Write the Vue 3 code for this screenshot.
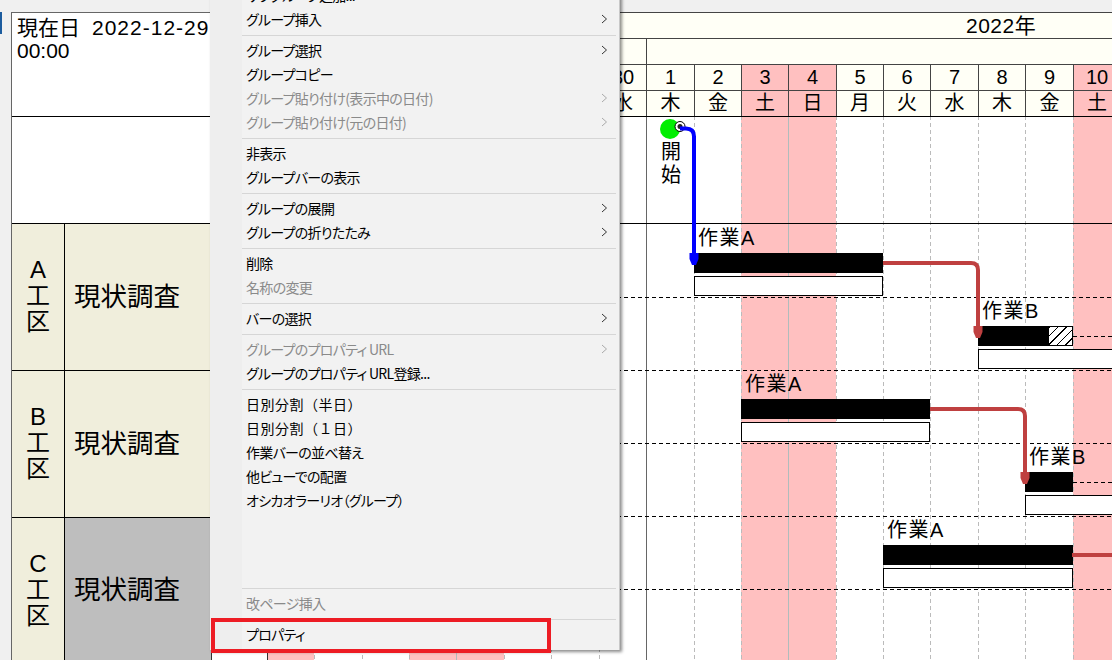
<template>
  <div class="app">
    <div class="top-strip"></div>
    <div class="sheet">
      <div class="rail"><div class="rail-mark"></div></div>

      <!-- 左側の工区リスト -->
      <div class="side">
        <div class="side-head">
          <span class="today-label">現在日</span><span class="today-date">2022-12-29</span><br />00:00
        </div>
        <div class="side-blank"></div>
        <div v-for="g in groups" :key="g.area" class="group" :class="{ last: g.gray }">
          <div class="area">
            <span>{{ g.area }}</span>
            <span>工</span>
            <span>区</span>
          </div>
          <div class="name" :class="{ gray: g.gray }">現状調査</div>
        </div>
      </div>

      <!-- タイムライン -->
      <div class="timeline" :style="{ width: totalWidth + 'px' }">
        <div class="year-row">2022年</div>
        <div class="month-row">
          <div class="month-nov"></div>
          <div class="month-dec"></div>
        </div>
        <div class="day-row" :style="gridCols">
          <div v-for="d in days" :key="d.key" class="head-cell" :class="{ off: d.off }">{{ d.num }}</div>
        </div>
        <div class="week-row" :style="gridCols">
          <div v-for="d in days" :key="d.key" class="head-cell" :class="{ off: d.off }">{{ d.wd }}</div>
        </div>

        <div class="chart">
          <div class="stripes" :style="gridCols">
            <div v-for="d in days" :key="d.key" class="stripe" :class="[d.line, { off: d.off }]"></div>
          </div>

          <div class="row row-first"></div>
          <div class="row row-solid"></div>
          <div v-for="n in 5" :key="n" class="row row-dashed"></div>

          <div class="label start" :style="place(661, 141)">開<br />始</div>

          <template v-for="b in bars" :key="b.label + b.x">
            <div class="label" :style="place(b.x + 4, b.y - 27)">{{ b.label }}</div>
            <div class="bar" :style="{ ...place(b.x, b.y), width: b.w + 'px' }"></div>
            <div v-if="b.hatch" class="hatch" :style="{ ...place(b.x + b.w, b.y), width: b.hatch + 'px' }"></div>
            <div class="plan" :style="{ ...place(b.x, b.y + 23), width: b.plan + 'px' }"></div>
            <div v-if="b.tail" class="tail" :style="{ ...place(b.x + b.w + (b.hatch || 0), b.y + 10), width: '60px' }"></div>
            <div v-if="b.link" class="link-out" :style="{ ...place(b.x + b.w - 1, b.y + 8), width: '60px' }"></div>
          </template>

          <svg class="links" :width="totalWidth" height="544" :viewBox="`211 116 ${totalWidth} 544`">
            <circle cx="670" cy="129" r="10" fill="#00ee00" />
            <circle cx="680" cy="126.5" r="5" fill="#fff" stroke="#000" stroke-width="1" />
            <circle cx="680" cy="126.5" r="2.5" fill="#222" />
            <path d="M680 128.5 H686 Q694 128.5 694 136.5 V258" class="link-blue" />
            <polygon points="689.5,253 698.5,253 698.5,259 696,265 692,265 689.5,259" fill="#0000ff" />
            <path d="M883 263 H971 Q978 263 978 270 V332" class="link-red" />
            <polygon points="973.5,326 982.5,326 982.5,332 980,338 976,338 973.5,332" fill="#bf4040" />
            <path d="M930 409 H1018 Q1025 409 1025 416 V478" class="link-red" />
            <polygon points="1020.5,472 1029.5,472 1029.5,478 1027,484 1023,484 1020.5,478" fill="#bf4040" />
          </svg>
        </div>
      </div>
    </div>

    <!-- 右クリックメニュー -->
    <div class="menu">
      <template v-for="(m, i) in menu" :key="i">
        <div v-if="m === '-'" class="sep"></div>
        <div v-else-if="m === ' '" class="blank"></div>
        <div v-else class="item" :class="{ disabled: m.off, full: m.full }">
          <span>{{ m.text }}</span>
          <svg v-if="m.arrow" class="chev" width="7" height="10" viewBox="0 0 7 10">
            <path d="M1 1 L5.5 5 L1 9" fill="none" stroke="currentColor" stroke-width="1" />
          </svg>
        </div>
      </template>
    </div>

    <div class="callout"></div>
  </div>
</template>

<script setup>
const groups = [
  { area: 'A' },
  { area: 'B' },
  { area: 'C', gray: true }
]

// 列幅は元画面のグリッド線に合わせる
const days = [
  { key: 'pre', num: '', wd: '', w: 56, line: 'line-dark' },
  { key: 'n23', num: 23, wd: '水', w: 47, line: 'line-dark', off: true },
  { key: 'n24', num: 24, wd: '木', w: 48 },
  { key: 'n25', num: 25, wd: '金', w: 47 },
  { key: 'n26', num: 26, wd: '土', w: 47, off: true },
  { key: 'n27', num: 27, wd: '日', w: 48, off: true, line: 'line-sun' },
  { key: 'n28', num: 28, wd: '月', w: 47 },
  { key: 'n29', num: 29, wd: '火', w: 48 },
  { key: 'n30', num: 30, wd: '水', w: 47 },
  { key: 'd1', num: 1, wd: '木', w: 48, line: 'line-month' },
  { key: 'd2', num: 2, wd: '金', w: 47 },
  { key: 'd3', num: 3, wd: '土', w: 47, off: true },
  { key: 'd4', num: 4, wd: '日', w: 48, off: true, line: 'line-sun' },
  { key: 'd5', num: 5, wd: '月', w: 47 },
  { key: 'd6', num: 6, wd: '火', w: 47 },
  { key: 'd7', num: 7, wd: '水', w: 48 },
  { key: 'd8', num: 8, wd: '木', w: 47 },
  { key: 'd9', num: 9, wd: '金', w: 48 },
  { key: 'd10', num: 10, wd: '土', w: 47, off: true }
]

const totalWidth = days.reduce((sum, d) => sum + d.w, 0)
const gridCols = { gridTemplateColumns: days.map(d => d.w + 'px').join(' ') }

const bars = [
  { label: '作業A', x: 694, y: 253, w: 189, plan: 189 },
  { label: '作業B', x: 978, y: 326, w: 71, hatch: 24, plan: 200, tail: true },
  { label: '作業A', x: 741, y: 399, w: 189, plan: 189 },
  { label: '作業B', x: 1025, y: 472, w: 48, plan: 200, tail: true },
  { label: '作業A', x: 883, y: 545, w: 190, plan: 190, link: true }
]

// 画面座標からチャート内の座標へ
function place(x, y) {
  return { left: x - 211 + 'px', top: y - 116 + 'px' }
}

const menu = [
  { text: 'サブグループ追加...' },
  { text: 'グループ挿入', arrow: true },
  '-',
  { text: 'グループ選択', arrow: true },
  { text: 'グループコピー' },
  { text: 'グループ貼り付け(表示中の日付)', arrow: true, off: true },
  { text: 'グループ貼り付け(元の日付)', arrow: true, off: true },
  '-',
  { text: '非表示' },
  { text: 'グループバーの表示' },
  '-',
  { text: 'グループの展開', arrow: true },
  { text: 'グループの折りたたみ', arrow: true },
  '-',
  { text: '削除' },
  { text: '名称の変更', off: true },
  '-',
  { text: 'バーの選択', arrow: true },
  '-',
  { text: 'グループのプロパティ URL', arrow: true, off: true },
  { text: 'グループのプロパティ URL登録...' },
  '-',
  { text: '日別分割（半日）', full: true },
  { text: '日別分割（１日）', full: true },
  { text: '作業バーの並べ替え' },
  { text: '他ビューでの配置' },
  { text: 'オシカオラーリオ（グループ）' },
  ' ',
  '-',
  { text: '改ページ挿入', off: true },
  '-',
  { text: 'プロパティ' }
]
</script>

<style scoped>
.app {
  position: relative;
  width: 1112px;
  height: 660px;
  overflow: hidden;
  background: #f0f0f0;
  font-family: "Liberation Sans", "Noto Sans CJK JP", sans-serif;
  color: #000;
}

.top-strip {
  height: 12px;
}

.sheet {
  display: flex;
  align-items: flex-start;
}

.rail {
  flex: none;
  width: 11px;
}

.rail-mark {
  width: 2px;
  height: 22px;
  background: #1c5c9e;
}

.side {
  flex: none;
  width: 200px;
  border-left: 1px solid #666;
  box-sizing: border-box;
  background: #fff;
}

.side-head {
  height: 104px;
  box-sizing: border-box;
  border-top: 1px solid #666;
  padding: 3px 0 0 5px;
  font-size: 21px;
  line-height: 23px;
  white-space: nowrap;
}

.today-date {
  margin-left: 12px;
  letter-spacing: 1px;
}

.side-blank {
  height: 107px;
  border-top: 1px solid #000;
  box-sizing: border-box;
}

.group {
  display: flex;
  height: 147px;
  box-sizing: border-box;
  border-top: 1px solid #000;
}

.group.last {
  height: 146px;
}

.area {
  flex: none;
  width: 53px;
  box-sizing: border-box;
  padding-bottom: 2px;
  border-right: 1px solid #000;
  background: #f0eedc;
  display: flex;
  flex-direction: column;
  align-items: center;
  justify-content: center;
  font-size: 24px;
  line-height: 26px;
}

.name {
  flex: 1;
  display: flex;
  align-items: center;
  padding: 0 0 6px 9px;
  background: #f0eedc;
  font-size: 26.5px;
  white-space: nowrap;
}

.name.gray {
  background: #bebebe;
}

.timeline {
  flex: none;
  background: #fff;
}

.year-row,
.month-row,
.day-row,
.week-row {
  height: 26px;
  box-sizing: border-box;
  border-top: 1px solid #444;
  background: #fffff6;
}

.year-row {
  padding-left: 755px;
  font-size: 21px;
  line-height: 26px;
  letter-spacing: 0.5px;
}

.month-row {
  display: flex;
}

.month-nov {
  width: 435px;
}

.month-dec {
  flex: 1;
  border-left: 1px solid #444;
}

.day-row,
.week-row {
  display: grid;
}

.head-cell {
  box-sizing: border-box;
  border-left: 1px solid #444;
  text-align: center;
  font-size: 20px;
  line-height: 25px;
  overflow: hidden;
}

.head-cell.off {
  background: #ffc0c0;
}

.chart {
  position: relative;
  height: 544px;
  overflow: hidden;
}

.stripes {
  position: absolute;
  inset: 0;
  display: grid;
}

.stripe {
  box-sizing: border-box;
  background: repeating-linear-gradient(180deg, #bbb 0 4px, transparent 4px 7px) left top / 1px 100% no-repeat;
}

.stripe.off {
  background-color: #ffc0c0;
}

.stripe.line-sun {
  background-image: none;
  border-left: 1px solid #b0bcbc;
}

.stripe.line-month {
  background-image: none;
  border-left: 1px solid #666;
}

.stripe.line-dark {
  background-image: none;
  border-left: 1px solid #333;
}

.row {
  position: relative;
  height: 73px;
  box-sizing: border-box;
}

.row-first {
  height: 107px;
  border-top: 1px solid #000;
}

.row-solid {
  height: 74px;
  border-top: 1px solid #000;
}

.row-dashed {
  background: repeating-linear-gradient(90deg, #000 0 4px, transparent 4px 7px) left top / 100% 1px no-repeat;
}

.links {
  position: absolute;
  left: 0;
  top: 0;
  z-index: 1;
}

.link-blue,
.link-red {
  fill: none;
  stroke-width: 4;
}

.link-blue {
  stroke: #0000ff;
}

.link-red {
  stroke: #bf4040;
}

.label {
  position: absolute;
  font-size: 20px;
  line-height: 24px;
  letter-spacing: 1.5px;
  white-space: nowrap;
}

.label.start {
  line-height: 23px;
  letter-spacing: 0;
}

.bar {
  position: absolute;
  height: 20px;
  background: #000;
}

.hatch {
  position: absolute;
  height: 20px;
  box-sizing: border-box;
  border: 1px solid #000;
  border-left: none;
  background: repeating-linear-gradient(135deg, #000 0 0.8px, #fff 0.8px 6px);
}

.plan {
  position: absolute;
  height: 20px;
  box-sizing: border-box;
  border: 1px solid #000;
  background: #fff;
}

.tail {
  position: absolute;
  height: 1px;
  background: repeating-linear-gradient(90deg, #000 0 4px, transparent 4px 7px);
}

.link-out {
  position: absolute;
  height: 4px;
  background: #bf4040;
}

.menu {
  position: absolute;
  z-index: 2;
  left: 210px;
  top: -16px;
  width: 410px;
  box-sizing: border-box;
  padding-bottom: 3px;
  background: linear-gradient(90deg, #eeeeee 0 32px, #f2f2f2 32px);
  border-right: 1px solid #c8c8c8;
  box-shadow: 2px 2px 3px rgba(0, 0, 0, 0.45);
  font-family: "Noto Sans CJK JP", sans-serif;
  font-size: 14px;
  font-feature-settings: "palt";
  letter-spacing: -0.7px;
}

.item {
  display: flex;
  align-items: center;
  justify-content: space-between;
  height: 24px;
  box-sizing: border-box;
  padding: 0 11px 2px 36px;
  white-space: nowrap;
}

.item.disabled {
  color: #8a8a8a;
}

.item.full {
  font-feature-settings: normal;
  letter-spacing: 0.5px;
}

.chev {
  color: #333;
}

.item.disabled .chev {
  color: #aaa;
}

.sep {
  height: 1px;
  margin: 3px 3px 3px 32px;
  background: #d6d6d6;
}

.blank {
  height: 72px;
}

.callout {
  position: absolute;
  z-index: 3;
  left: 211px;
  top: 618px;
  width: 340px;
  height: 35px;
  box-sizing: border-box;
  border: 4px solid #ed1c24;
}
</style>
